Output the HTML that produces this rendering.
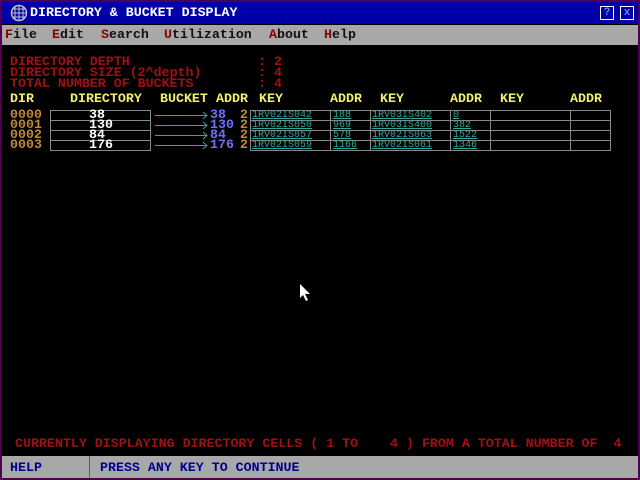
<!DOCTYPE html>
<html><head><style>
*{margin:0;padding:0;box-sizing:border-box}
body{width:640px;height:480px;background:#000;position:relative;overflow:hidden;font-family:"Liberation Mono",monospace;font-weight:bold;font-size:13.3px}
.a{position:absolute;white-space:pre;line-height:12px}
.r{color:#a01010}
.y{color:#f0f070}
.o{color:#c08838}
.w{color:#fff}
.b{color:#7070ff}
.k{color:#30a8a0;font-weight:normal;font-size:10px;text-decoration:underline;line-height:10px}
.m{color:#101010}
.m i{font-style:normal;color:#8a0000}
.n{color:#000090}
</style></head><body>
<div style="position:absolute;left:0;top:0;width:640px;height:480px;border:2px solid #500050"></div>
<div style="position:absolute;left:2px;top:2px;width:636px;height:22px;background:#0000a8"></div>
<svg style="position:absolute;left:10px;top:4px" width="18" height="18"><circle cx="9" cy="9" r="7.5" fill="#0000a8" stroke="#c0c0c0" stroke-width="1.5"/><path d="M5 3V15M9 1.5V16.5M13 3V15M3 5H15M1.5 9H16.5M3 13H15" stroke="#c0c0c0"/></svg>
<div class="a w" style="left:30px;top:7px">DIRECTORY &amp; BUCKET DISPLAY</div>
<div style="position:absolute;left:600px;top:6px;width:14px;height:14px;border:1px solid #fff;color:#5a8ce0;font-size:11px;text-align:center;line-height:12px">?</div>
<div style="position:absolute;left:620px;top:6px;width:14px;height:14px;border:1px solid #fff;color:#5a8ce0;font-size:11px;text-align:center;line-height:12px">x</div>
<div style="position:absolute;left:2px;top:25px;width:636px;height:20px;background:#a8a8a8"></div>
<div class="a m" style="left:5px;top:29px"><i>F</i>ile</div>
<div class="a m" style="left:52px;top:29px"><i>E</i>dit</div>
<div class="a m" style="left:101px;top:29px"><i>S</i>earch</div>
<div class="a m" style="left:164px;top:29px"><i>U</i>tilization</div>
<div class="a m" style="left:269px;top:29px"><i>A</i>bout</div>
<div class="a m" style="left:324px;top:29px"><i>H</i>elp</div>
<div class="a r" style="left:10px;top:56px;line-height:11px">DIRECTORY DEPTH
DIRECTORY SIZE (2^depth)
TOTAL NUMBER OF BUCKETS</div>
<div class="a r" style="left:258px;top:56px;line-height:11px">: 2
: 4
: 4</div>
<div class="a y" style="left:10px;top:93px">DIR</div>
<div class="a y" style="left:70px;top:93px">DIRECTORY</div>
<div class="a y" style="left:160px;top:93px">BUCKET</div>
<div class="a y" style="left:216px;top:93px">ADDR</div>
<div class="a y" style="left:259px;top:93px">KEY</div>
<div class="a y" style="left:330px;top:93px">ADDR</div>
<div class="a y" style="left:380px;top:93px">KEY</div>
<div class="a y" style="left:450px;top:93px">ADDR</div>
<div class="a y" style="left:500px;top:93px">KEY</div>
<div class="a y" style="left:570px;top:93px">ADDR</div>
<div class="a o" style="left:10px;top:110px;line-height:10px">0000
0001
0002
0003</div>
<svg style="position:absolute;left:0;top:0" width="640" height="480">
<g stroke="#888" fill="none" stroke-width="1">
<rect x="50.5" y="110.5" width="100" height="40"/>
<path d="M50 120.5H150M50 130.5H150M50 140.5H150"/>
<rect x="250.5" y="110.5" width="360" height="40"/>
<path d="M250 120.5H610M250 130.5H610M250 140.5H610M330.5 110V150M370.5 110V150M450.5 110V150M490.5 110V150M570.5 110V150"/>
</g>
<g stroke="#30a8a0" fill="none">
<path d="M155 115.5H207M203 112L207 115.5L203 119M155 125.5H207M203 122L207 125.5L203 129M155 135.5H207M203 132L207 135.5L203 139M155 145.5H207M203 142L207 145.5L203 149"/>
</g>
<path d="M300 284V298L303 295L306 301L308 300L305 294H310Z" fill="#fff"/>
</svg>
<div class="a w" style="left:89px;top:110px;line-height:10px">38
130
84
176</div>
<div class="a b" style="left:210px;top:110px;line-height:10px">38
130
84
176</div>
<div class="a o" style="left:240px;top:110px;line-height:10px">2
2
2
2</div>
<div class="a k" style="left:252px;top:111px">1RV02IS042
1RV02IS050
1RV02IS057
1RV02IS059</div>
<div class="a k" style="left:333px;top:111px">188
969
578
1166</div>
<div class="a k" style="left:372px;top:111px">1RV03IS402
1RV03IS400
1RV02IS063
1RV02IS061</div>
<div class="a k" style="left:453px;top:111px">0
382
1522
1346</div>
<div class="a r" style="left:15px;top:438px">CURRENTLY DISPLAYING DIRECTORY CELLS ( 1 TO    4 ) FROM A TOTAL NUMBER OF  4</div>
<div style="position:absolute;left:2px;top:456px;width:636px;height:22px;background:#a8a8a8"></div>
<div style="position:absolute;left:89px;top:456px;width:1px;height:22px;background:#606060"></div>
<div class="a n" style="left:10px;top:462px">HELP</div>
<div class="a n" style="left:100px;top:462px">PRESS ANY KEY TO CONTINUE</div>
</body></html>
